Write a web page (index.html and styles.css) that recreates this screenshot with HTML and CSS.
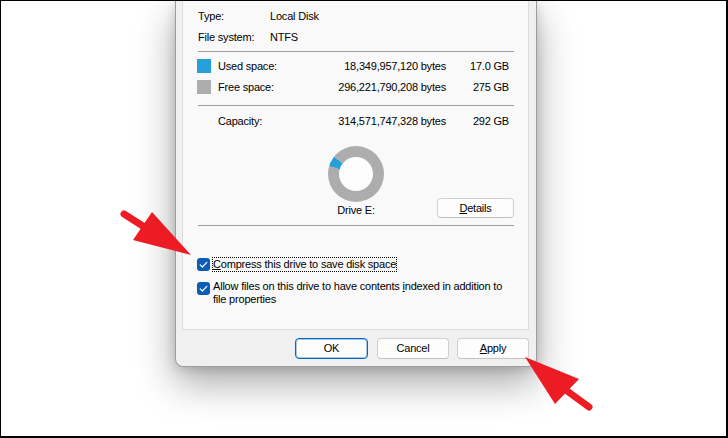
FILE: index.html
```html
<!DOCTYPE html>
<html>
<head>
<meta charset="utf-8">
<link rel="stylesheet" href="styles.css">
</head>
<body>
<div class="screen">
  <div class="desk">
    <div class="dialog">
      <div class="panel">
        <div class="info-row"><span>Type:</span><span>Local Disk</span></div>
        <div class="info-row"><span>File system:</span><span>NTFS</span></div>
        <div class="sep sep-a"></div>
        <div class="space-row">
          <span class="swatch used"></span><span class="label">Used space:</span><span class="num">18,349,957,120 bytes</span><span class="gb">17.0 GB</span>
        </div>
        <div class="space-row">
          <span class="swatch free"></span><span class="label">Free space:</span><span class="num">296,221,790,208 bytes</span><span class="gb">275 GB</span>
        </div>
        <div class="sep sep-b"></div>
        <div class="space-row cap-row">
          <span class="swatch"></span><span class="label">Capacity:</span><span class="num">314,571,747,328 bytes</span><span class="gb">292 GB</span>
        </div>
        <div class="chart-row">
          <div class="chart-col">
            <div class="donut"><div class="hole"></div></div>
            <div class="drive">Drive E:</div>
          </div>
          <div class="btn details"><u>D</u>etails</div>
        </div>
        <div class="sep sep-c"></div>
        <div class="check-row first">
          <span class="box"><svg width="13" height="13" viewBox="0 0 13 13"><path d="M3.2 6.8 L5.4 9 L9.8 4.4" fill="none" stroke="#fff" stroke-width="1.2" stroke-linecap="round" stroke-linejoin="round"/></svg></span>
          <span class="focus"><u>C</u>ompress this drive to save disk space</span>
        </div>
        <div class="check-row second">
          <span class="box"><svg width="13" height="13" viewBox="0 0 13 13"><path d="M3.2 6.8 L5.4 9 L9.8 4.4" fill="none" stroke="#fff" stroke-width="1.2" stroke-linecap="round" stroke-linejoin="round"/></svg></span>
          <span class="ctext">Allow files on this drive to have contents <u>i</u>ndexed in addition to<br>file properties</span>
        </div>
      </div>
      <div class="buttons">
        <div class="btn ok">OK</div>
        <div class="btn cancel">Cancel</div>
        <div class="btn apply"><u>A</u>pply</div>
      </div>
    </div>
  </div>
  <svg class="arrows" width="728" height="438" viewBox="0 0 728 438">
    <line x1="124" y1="214" x2="146" y2="228" stroke="#ed1c24" stroke-width="7" stroke-linecap="round"/>
    <polygon points="152,212 133,240 191,255" fill="#ed1c24"/>
    <line x1="563" y1="388" x2="589" y2="407" stroke="#ed1c24" stroke-width="7" stroke-linecap="round"/>
    <polygon points="525,357 579,379 555,404" fill="#ed1c24"/>
  </svg>
</div>
</body>
</html>
```
FILE: styles.css
```css
html, body {
  margin: 0;
  padding: 0;
  background: #fff;
}
.screen {
  position: relative;
  width: 728px;
  height: 438px;
  box-sizing: border-box;
  border-style: solid;
  border-color: #000;
  border-width: 1px 2px 2px 1px;
  background: #fff;
  overflow: hidden;
  font-family: "Liberation Sans", Arial, sans-serif;
  font-size: 11px;
  letter-spacing: -0.2px;
  color: #000;
}
.desk {
  display: flex;
  padding-left: 174px;
}
.dialog {
  width: 362px;
  box-sizing: border-box;
  background: #f0f0f0;
  border: 1px solid #9c9c9c;
  border-top: none;
  border-radius: 0 0 8px 8px;
  padding: 0 7px 7px 6px;
  box-shadow: 0 16px 38px rgba(0, 0, 0, 0.34), 0 2px 12px rgba(0, 0, 0, 0.16);
}
.panel {
  height: 329px;
  box-sizing: border-box;
  background: #f9f9f9;
  border: 1px solid #dcdcdc;
  border-top: none;
  padding: 5px 14px 0 15px;
}
.info-row {
  display: grid;
  grid-template-columns: 72px 1fr;
  height: 21px;
  box-sizing: border-box;
  padding-bottom: 2px;
  align-items: center;
}
.sep {
  height: 1px;
  background: #a0a0a0;
}
.sep-a { margin: 3px 0 4px; }
.sep-b { margin: 7px 0 5px; }
.sep-c { margin: 7px 0 0; }
.space-row {
  display: grid;
  grid-template-columns: 14px 1fr auto 63px;
  height: 21px;
  box-sizing: border-box;
  padding-bottom: 2px;
  align-items: center;
  margin-left: -1px;
  padding-right: 5px;
}
.swatch {
  width: 14px;
  height: 14px;
}
.swatch.used { background: #26a0da; }
.swatch.free { background: #adadad; }
.label { padding-left: 7px; }
.num { text-align: right; }
.gb { text-align: right; }
.chart-row {
  display: grid;
  grid-template-columns: 1fr auto 1fr;
  margin-top: 14px;
}
.chart-col {
  grid-column: 2;
  display: flex;
  flex-direction: column;
  align-items: center;
}
.donut {
  width: 56px;
  height: 56px;
  border-radius: 50%;
  background: conic-gradient(#adadad 0deg 287deg, #26a0da 287deg 308deg, #adadad 308deg 360deg);
  display: flex;
  align-items: center;
  justify-content: center;
}
.hole {
  width: 34px;
  height: 34px;
  border-radius: 50%;
  background: #fdfdfd;
}
.drive {
  margin-top: 2px;
  height: 14px;
  line-height: 13px;
}
.btn {
  box-sizing: border-box;
  display: flex;
  align-items: center;
  justify-content: center;
  background: #fdfdfd;
  border: 1px solid #d0d0d0;
  border-bottom-color: #c2c2c2;
  border-radius: 4px;
}
.details {
  grid-column: 3;
  justify-self: end;
  align-self: end;
  width: 77px;
  height: 20px;
}
.check-row {
  display: flex;
  align-items: flex-start;
  margin-left: -1px;
}
.check-row.first {
  margin-top: 31px;
  align-items: center;
  height: 15px;
}
.check-row.second {
  margin-top: 8px;
}
.box {
  width: 13px;
  height: 13px;
  border-radius: 3px;
  background: #0a5fb4;
  flex: none;
  display: block;
}
.box svg { display: block; }
.second .box { margin-top: 2px; }
.focus {
  margin-left: 2px;
  border: 1px dotted #000;
  line-height: 13px;
}
.ctext {
  margin-left: 3px;
  line-height: 13px;
  white-space: nowrap;
}
.buttons {
  display: flex;
  justify-content: flex-end;
  margin-top: 8px;
  height: 21px;
}
.buttons .btn {
  width: 72px;
  height: 21px;
  padding-bottom: 1px;
}
.buttons .ok {
  width: 73px;
  border: 1px solid #0a64c0;
  box-shadow: inset 0 0 0 1px rgba(10, 100, 192, 0.35);
}
.buttons .cancel { margin-left: 9px; }
.buttons .apply { margin-left: 8px; }
.arrows {
  position: absolute;
  left: -1px;
  top: -1px;
  pointer-events: none;
}
```
